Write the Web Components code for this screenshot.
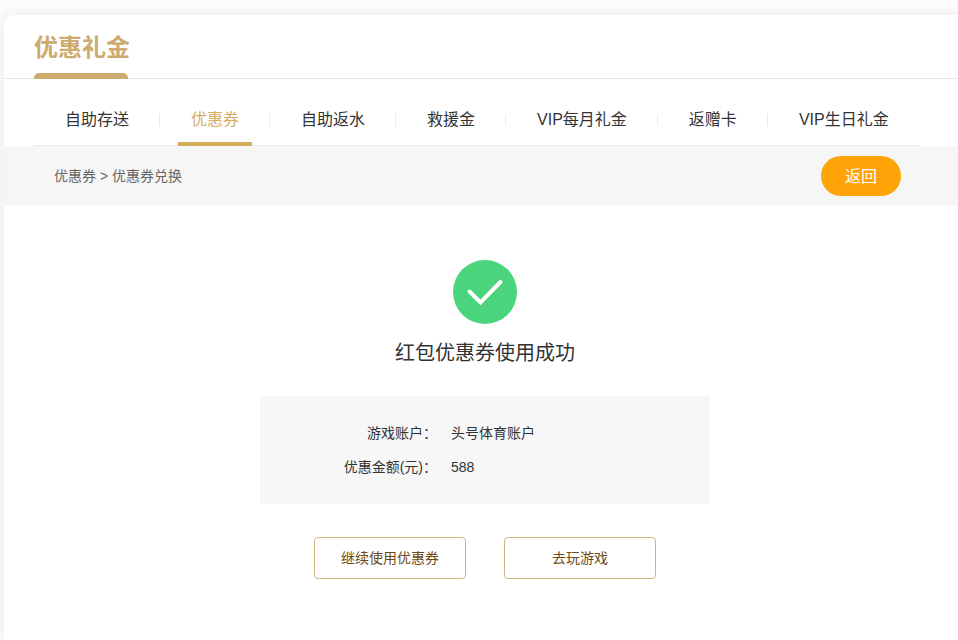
<!DOCTYPE html>
<html lang="zh-CN">
<head>
<meta charset="utf-8">
<meta name="viewport" content="width=device-width, initial-scale=1">
<title>优惠礼金</title>
<style>
  body {
    margin: 0;
    min-height: 100vh;
    display: flex;
    background: #fcfcfc;
    color: #333;
    font-family: "Liberation Sans", "Noto Sans CJK SC", sans-serif;
    font-size: 14px;
    overflow-x: hidden;
  }
</style>
</head>
<body>

<promo-card titulo="优惠礼金">
  <promo-tabs>
    <promo-tab>自助存送</promo-tab>
    <promo-tab activo>优惠券</promo-tab>
    <promo-tab>自助返水</promo-tab>
    <promo-tab>救援金</promo-tab>
    <promo-tab>VIP每月礼金</promo-tab>
    <promo-tab>返赠卡</promo-tab>
    <promo-tab>VIP生日礼金</promo-tab>
  </promo-tabs>
  <crumb-bar>优惠券 &gt; 优惠券兑换</crumb-bar>
  <result-panel>
    <span slot="mensaje">红包优惠券使用成功</span>
    <detail-list cuenta="头号体育账户" importe="588"></detail-list>
    <outline-button slot="acciones">继续使用优惠券</outline-button>
    <outline-button slot="acciones">去玩游戏</outline-button>
  </result-panel>
</promo-card>

<script>
class PromoCard extends HTMLElement {
  constructor() {
    super();
    this.attachShadow({ mode: 'open' });
  }

  connectedCallback() {
    this.shadowRoot.innerHTML = `
      <style>
        :host {
          display: block;
          flex: 1;
          margin: 15px -8px 0 4px;
          background: #fff;
          border-radius: 10px 0 0 0;
          box-shadow: 0 0 14px rgba(0, 0, 0, 0.08);
        }

        header {
          display: flex;
          height: 63px;
          padding: 0 30px;
          border-bottom: 1px solid #e9e9e9;
        }

        h1 {
          display: flex;
          flex-direction: column;
          justify-content: space-between;
          margin: 0 0 -1px;
          color: #cdaa6d;
          font-size: 24px;
          line-height: 32px;
          padding-top: 17px;
        }

        h1::after {
          content: "";
          height: 6px;
          margin-right: 2px;
          background: #cdaa6d;
          border-radius: 5px 5px 0 0;
        }
      </style>
      <header><h1>${this.getAttribute('titulo')}</h1></header>
      <slot></slot>
    `;
  }
}

class PromoTabs extends HTMLElement {
  constructor() {
    super();
    this.attachShadow({ mode: 'open' });
  }

  connectedCallback() {
    this.shadowRoot.innerHTML = `
      <style>
        :host {
          display: block;
          padding: 15px 46px 0 30px;
        }

        nav {
          display: flex;
          border-bottom: 1px solid #ebebeb;
        }

        /* separador entre pestañas */
        ::slotted(promo-tab:not(:last-child)) {
          background: linear-gradient(#ebebeb, #ebebeb) right 20px / 1px 12px no-repeat;
        }
      </style>
      <nav><slot></slot></nav>
    `;
  }
}

class PromoTab extends HTMLElement {
  constructor() {
    super();
    this.attachShadow({ mode: 'open' });
  }

  connectedCallback() {
    this.shadowRoot.innerHTML = `
      <style>
        :host {
          display: block;
          padding: 0 18px;
          margin-bottom: -1px;
        }

        a {
          display: block;
          padding: 4px 13px 0;
          border-bottom: 4px solid transparent;
          color: #333;
          font-size: 16px;
          line-height: 44px;
          text-decoration: none;
          white-space: nowrap;
        }

        :host([activo]) a {
          color: #d5ad5c;
          border-color: #d5ad5c;
        }
      </style>
      <a href="#"><slot></slot></a>
    `;
  }
}

class CrumbBar extends HTMLElement {
  constructor() {
    super();
    this.attachShadow({ mode: 'open' });
  }

  connectedCallback() {
    this.shadowRoot.innerHTML = `
      <style>
        :host {
          display: flex;
          align-items: center;
          justify-content: space-between;
          height: 60px;
          padding: 0 65px 0 50px;
          background: #f6f6f6;
          color: #666;
        }

        span {
          padding-bottom: 2px;
        }

        button {
          width: 80px;
          height: 40px;
          padding: 0 0 2px;
          border: 0;
          border-radius: 20px;
          background: #ffa408;
          color: #fff;
          font: inherit;
          font-size: 16px;
          cursor: pointer;
        }
      </style>
      <span><slot></slot></span>
      <button type="button">返回</button>
    `;
  }
}

class ResultPanel extends HTMLElement {
  constructor() {
    super();
    this.attachShadow({ mode: 'open' });
  }

  connectedCallback() {
    this.shadowRoot.innerHTML = `
      <style>
        :host {
          display: flex;
          flex-direction: column;
          align-items: center;
          padding: 54px 0 60px;
        }

        svg {
          display: block;
          width: 64px;
          height: 64px;
        }

        h2 {
          margin: 14px 0 28px;
          font-size: 20px;
          font-weight: normal;
          line-height: 30px;
        }

        .acciones {
          display: flex;
          gap: 38px;
          margin-top: 33px;
        }
      </style>
      <svg viewBox="0 0 64 64" aria-hidden="true">
        <circle cx="32" cy="32" r="32" fill="#4ad47c"/>
        <path d="M16.500 31.500L27.500 42.500L47.500 22" fill="none" stroke="#fff" stroke-width="4" stroke-linecap="round"/>
      </svg>
      <h2><slot name="mensaje"></slot></h2>
      <slot></slot>
      <div class="acciones"><slot name="acciones"></slot></div>
    `;
  }
}

class DetailList extends HTMLElement {
  constructor() {
    super();
    this.attachShadow({ mode: 'open' });
  }

  connectedCallback() {
    this.shadowRoot.innerHTML = `
      <style>
        :host {
          display: block;
          width: 100%;
          max-width: 450px;
          background: #f7f7f7;
        }

        dl {
          display: grid;
          grid-template-columns: 177px 1fr;
          column-gap: 14px;
          margin: 0;
          padding: 20px 0;
          line-height: 34px;
        }

        dt {
          text-align: right;
        }

        dd {
          margin: 0;
        }
      </style>
      <dl>
        <dt>游戏账户：</dt>
        <dd>${this.getAttribute('cuenta')}</dd>
        <dt>优惠金额(元)：</dt>
        <dd>${this.getAttribute('importe')}</dd>
      </dl>
    `;
  }
}

class OutlineButton extends HTMLElement {
  constructor() {
    super();
    this.attachShadow({ mode: 'open' });
  }

  connectedCallback() {
    this.shadowRoot.innerHTML = `
      <style>
        :host {
          display: block;
        }

        button {
          width: 152px;
          height: 42px;
          padding: 0 0 2px;
          border: 1px solid #cfb482;
          border-radius: 4px;
          background: #fff;
          color: #6b4a16;
          font: inherit;
          cursor: pointer;
        }
      </style>
      <button type="button"><slot></slot></button>
    `;
  }
}

window.customElements.define('promo-card', PromoCard);
window.customElements.define('promo-tabs', PromoTabs);
window.customElements.define('promo-tab', PromoTab);
window.customElements.define('crumb-bar', CrumbBar);
window.customElements.define('result-panel', ResultPanel);
window.customElements.define('detail-list', DetailList);
window.customElements.define('outline-button', OutlineButton);
</script>
</body>
</html>
